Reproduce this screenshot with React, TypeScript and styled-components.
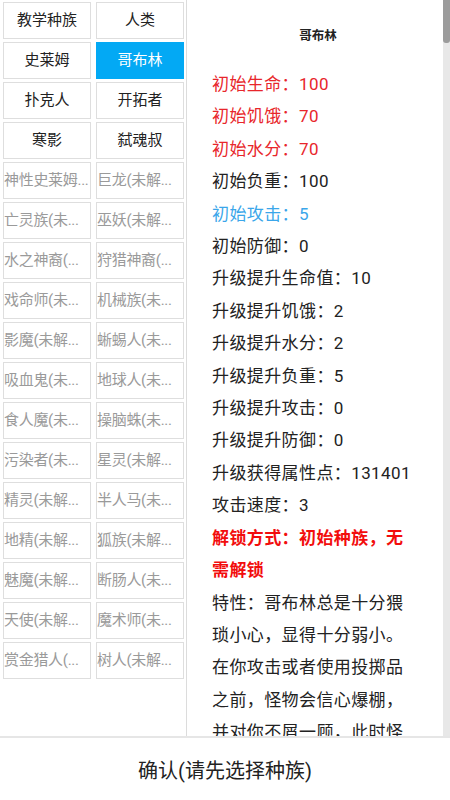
import React from 'react';
import styled, { createGlobalStyle } from 'styled-components';

type Race = { name: string; locked?: boolean };

const races: Race[] = [
  { name: '教学种族' },
  { name: '人类' },
  { name: '史莱姆' },
  { name: '哥布林' },
  { name: '扑克人' },
  { name: '开拓者' },
  { name: '寒影' },
  { name: '弑魂叔' },
  { name: '神性史莱姆', locked: true },
  { name: '巨龙', locked: true },
  { name: '亡灵族', locked: true },
  { name: '巫妖', locked: true },
  { name: '水之神裔', locked: true },
  { name: '狩猎神裔', locked: true },
  { name: '戏命师', locked: true },
  { name: '机械族', locked: true },
  { name: '影魔', locked: true },
  { name: '蜥蜴人', locked: true },
  { name: '吸血鬼', locked: true },
  { name: '地球人', locked: true },
  { name: '食人魔', locked: true },
  { name: '操脑蛛', locked: true },
  { name: '污染者', locked: true },
  { name: '星灵', locked: true },
  { name: '精灵', locked: true },
  { name: '半人马', locked: true },
  { name: '地精', locked: true },
  { name: '狐族', locked: true },
  { name: '魅魔', locked: true },
  { name: '断肠人', locked: true },
  { name: '天使', locked: true },
  { name: '魔术师', locked: true },
  { name: '赏金猎人', locked: true },
  { name: '树人', locked: true },
];

// the list cells cut long labels after five characters, like the app does
const cellLabel = (r: Race) => {
  if (!r.locked) return r.name;
  const full = `${r.name}(未解锁)`;
  return full.length > 5 ? `${full.slice(0, 5)}...` : full;
};

type Tone = 'red' | 'blue' | 'plain' | 'alert';

const stats: { text: string; tone: Tone }[] = [
  { text: '初始生命：100', tone: 'red' },
  { text: '初始饥饿：70', tone: 'red' },
  { text: '初始水分：70', tone: 'red' },
  { text: '初始负重：100', tone: 'plain' },
  { text: '初始攻击：5', tone: 'blue' },
  { text: '初始防御：0', tone: 'plain' },
  { text: '升级提升生命值：10', tone: 'plain' },
  { text: '升级提升饥饿：2', tone: 'plain' },
  { text: '升级提升水分：2', tone: 'plain' },
  { text: '升级提升负重：5', tone: 'plain' },
  { text: '升级提升攻击：0', tone: 'plain' },
  { text: '升级提升防御：0', tone: 'plain' },
  { text: '升级获得属性点：131401', tone: 'plain' },
  { text: '攻击速度：3', tone: 'plain' },
  { text: '解锁方式：初始种族，无需解锁', tone: 'alert' },
  {
    text: '特性：哥布林总是十分猥琐小心，显得十分弱小。在你攻击或者使用投掷品之前，怪物会信心爆棚，并对你不屑一顾，此时怪物对你造成的伤害降低。',
    tone: 'plain',
  },
];

const toneColor: Record<Tone, string> = {
  red: '#e8262b',
  blue: '#3aa6ea',
  plain: '#222',
  alert: '#f20d0d',
};

export default function App() {
  const selected = '哥布林';
  return (
    <>
      <GlobalStyle />
      <Screen>
        <Main>
          <RaceList>
            {races.map((r) => (
              <RaceCell key={r.name} $selected={r.name === selected} $locked={!!r.locked}>
                {cellLabel(r)}
              </RaceCell>
            ))}
          </RaceList>
          <DetailPane>
            <DetailBody>
              <Title>{selected}</Title>
              {stats.map((s) => (
                <StatLine key={s.text} $tone={s.tone}>
                  {s.text}
                </StatLine>
              ))}
            </DetailBody>
            <ScrollTrack>
              <ScrollThumb />
            </ScrollTrack>
          </DetailPane>
        </Main>
        <Footer>确认(请先选择种族)</Footer>
      </Screen>
    </>
  );
}

const GlobalStyle = createGlobalStyle`
  html, body {
    margin: 0;
    padding: 0;
    background: #fff;
  }
  body {
    font-family: Roboto, "Noto Sans CJK SC", sans-serif;
  }
`;

const Screen = styled.div`
  width: 450px;
  height: 800px;
  display: flex;
  flex-direction: column;
  overflow: hidden;
`;

const Main = styled.div`
  display: flex;
  height: 736px;
  flex-shrink: 0;
`;

const RaceList = styled.div`
  width: 183px;
  flex-shrink: 0;
  padding: 2px 0 0 3px;
  border-right: 1px solid #dcdcdc;
  display: grid;
  grid-template-columns: 88px 88px;
  grid-auto-rows: 37px;
  column-gap: 5px;
  row-gap: 3px;
  align-content: start;
`;

const RaceCell = styled.div<{ $selected: boolean; $locked: boolean }>`
  box-sizing: border-box;
  border: 1px solid ${(p) => (p.$selected ? '#03a9f4' : '#dedede')};
  background: ${(p) => (p.$selected ? '#03a9f4' : '#fff')};
  color: ${(p) => (p.$selected ? '#fff' : p.$locked ? '#9a9a9a' : '#222')};
  font-size: 15px;
  line-height: 35px;
  text-align: ${(p) => (p.$locked ? 'left' : 'center')};
  letter-spacing: ${(p) => (p.$locked ? '-0.3px' : '0')};
  white-space: nowrap;
  overflow: hidden;
`;

const DetailPane = styled.div`
  flex: 1;
  display: flex;
  overflow: hidden;
`;

const DetailBody = styled.div`
  flex: 1;
  padding: 0 27px 0 25px;
  overflow: hidden;
`;

const Title = styled.div`
  font-size: 12.5px;
  font-weight: bold;
  color: #222;
  text-align: center;
  padding: 26px 0 0 8px;
  line-height: 20px;
  margin-bottom: 22px;
`;

const StatLine = styled.div<{ $tone: Tone }>`
  font-size: 17px;
  line-height: 32.4px;
  letter-spacing: 0.4px;
  color: ${(p) => toneColor[p.$tone]};
  font-weight: ${(p) => (p.$tone === 'alert' ? 'bold' : 'normal')};
`;

const ScrollTrack = styled.div`
  width: 7px;
  flex-shrink: 0;
  background: #e8e8e8;
`;

const ScrollThumb = styled.div`
  height: 43px;
  background: #9c9c9c;
  border-radius: 0 0 3px 3px;
`;

const Footer = styled.div`
  flex: 1;
  border-top: 2px solid #e6e6e6;
  display: flex;
  align-items: center;
  justify-content: center;
  font-size: 20px;
  color: #222;
`;
